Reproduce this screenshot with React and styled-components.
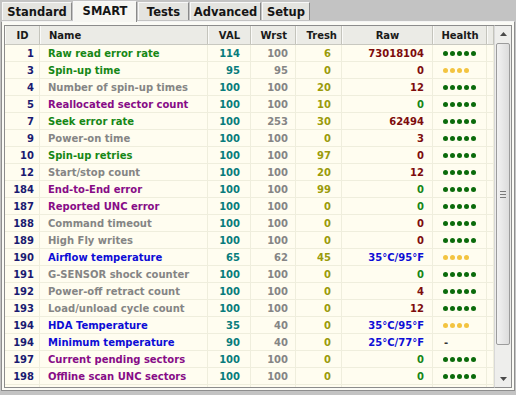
import React from 'react';
import styled, { createGlobalStyle } from 'styled-components';

const GlobalStyle = createGlobalStyle`
  html, body { margin: 0; padding: 0; background: #c3c3c3; }
  body { font-family: Tahoma, "DejaVu Sans", sans-serif; }
`;

const C = {
  green: '#168716',
  gray: '#858585',
  purple: '#870c87',
  blue: '#0d0dd6',
  teal: '#087c7c',
  olive: '#9b9b0a',
  red: '#7d0c0c',
  navy: '#1a1a70',
};

const rows = [
  ['1', 'Raw read error rate', 'green', '114', '100', '6', '73018104', 'red', 5],
  ['3', 'Spin-up time', 'green', '95', '95', '0', '0', 'red', 4],
  ['4', 'Number of spin-up times', 'gray', '100', '100', '20', '12', 'red', 5],
  ['5', 'Reallocated sector count', 'purple', '100', '100', '10', '0', 'green', 5],
  ['7', 'Seek error rate', 'green', '100', '253', '30', '62494', 'red', 5],
  ['9', 'Power-on time', 'gray', '100', '100', '0', '3', 'red', 5],
  ['10', 'Spin-up retries', 'green', '100', '100', '97', '0', 'red', 5],
  ['12', 'Start/stop count', 'gray', '100', '100', '20', '12', 'red', 5],
  ['184', 'End-to-End error', 'purple', '100', '100', '99', '0', 'green', 5],
  ['187', 'Reported UNC error', 'purple', '100', '100', '0', '0', 'green', 5],
  ['188', 'Command timeout', 'gray', '100', '100', '0', '0', 'red', 5],
  ['189', 'High Fly writes', 'gray', '100', '100', '0', '0', 'red', 5],
  ['190', 'Airflow temperature', 'blue', '65', '62', '45', '35°C/95°F', 'blue', 4],
  ['191', 'G-SENSOR shock counter', 'gray', '100', '100', '0', '0', 'green', 5],
  ['192', 'Power-off retract count', 'gray', '100', '100', '0', '4', 'red', 5],
  ['193', 'Load/unload cycle count', 'gray', '100', '100', '0', '12', 'red', 5],
  ['194', 'HDA Temperature', 'blue', '35', '40', '0', '35°C/95°F', 'blue', 4],
  ['194', 'Minimum temperature', 'blue', '90', '40', '0', '25°C/77°F', 'blue', 0],
  ['197', 'Current pending sectors', 'purple', '100', '100', '0', '0', 'green', 5],
  ['198', 'Offline scan UNC sectors', 'purple', '100', '100', '0', '0', 'green', 5],
  ['199', 'UltraDMA CRC error count', 'purple', '200', '200', '0', '0', 'green', 5],
];

const tabs = [
  ['Standard', 70],
  ['SMART', 64],
  ['Tests', 51],
  ['Advanced', 71],
  ['Setup', 48],
];
const cols = '35px 168px 43px 45px 46px 91px 54px 1fr';

// padding of each column, taken from the reference
const pad = ['0 5px 0 2px', '0 4px 0 8px', '0 10px 0 2px', '0 7px 0 2px', '0 10px 0 2px', '0 8px 0 2px', '0 2px 0 10px', '0'];

export default function App() {
  return (
    <>
      <GlobalStyle />
      <Window>
        <TabBar>
          {tabs.map(([t, w]) => (
            <Tab key={t} $w={w} $active={t === 'SMART'}>{t}</Tab>
          ))}
        </TabBar>
        <Panel>
          <Grid>
            <HeadRow>
              <Head $align="center">ID</Head>
              <Head $align="left" $pad={pad[1]}>Name</Head>
              <Head $align="right" $pad={pad[2]}>VAL</Head>
              <Head $align="right" $pad="0 8px 0 2px">Wrst</Head>
              <Head $align="right" $pad="0 4px 0 2px">Tresh</Head>
              <Head $align="center">Raw</Head>
              <Head $align="center">Health</Head>
              <Head />
            </HeadRow>
            <Body>
              {rows.map((r, i) => (
                <Row key={i}>
                  <Cell $pad={pad[0]} $color={C.navy}>{r[0]}</Cell>
                  <Cell $pad={pad[1]} $align="left" $color={C[r[2]]}>{r[1]}</Cell>
                  <Cell $pad={pad[2]} $color={C.teal}>{r[3]}</Cell>
                  <Cell $pad={pad[3]} $color={C.gray}>{r[4]}</Cell>
                  <Cell $pad={pad[4]} $color={C.olive}>{r[5]}</Cell>
                  <Cell $pad={pad[5]} $color={C[r[7]]}>{r[6]}</Cell>
                  <Cell $pad={pad[6]} $align="left">
                    {r[8] === 0 ? (
                      <Dash>-</Dash>
                    ) : (
                      <Dots>
                        {Array.from({ length: r[8] }).map((_, k) => (
                          <Dot key={k} $warn={r[8] === 4} />
                        ))}
                      </Dots>
                    )}
                  </Cell>
                  <Cell $pad={pad[7]} />
                </Row>
              ))}
            </Body>
          </Grid>
          <ScrollBar>
            <Arrow>
              <svg width="7" height="4" viewBox="0 0 7 4"><path d="M0 4 L3.5 0 L7 4Z" fill="#4a4a4a" /></svg>
            </Arrow>
            <Track>
              <Thumb>
                <Grip>
                  <span /><span /><span />
                </Grip>
              </Thumb>
            </Track>
            <Arrow>
              <svg width="7" height="4" viewBox="0 0 7 4"><path d="M0 0 L3.5 4 L7 0Z" fill="#4a4a4a" /></svg>
            </Arrow>
          </ScrollBar>
        </Panel>
      </Window>
    </>
  );
}

const Window = styled.div`
  width: 516px;
  height: 395px;
  display: flex;
  flex-direction: column;
  overflow: hidden;
  background: #c3c3c3;
  font-size: 10px;
  font-weight: bold;
`;

const TabBar = styled.div`
  display: flex;
  align-items: flex-end;
  height: 21px;
  padding-left: 2px;
  gap: 1px;
`;

const Tab = styled.div`
  box-sizing: border-box;
  width: ${(p) => p.$w}px;
  height: ${(p) => (p.$active ? '21px' : '18px')};
  margin-bottom: ${(p) => (p.$active ? '-1px' : '1px')};
  padding-bottom: ${(p) => (p.$active ? '2px' : '0')};
  display: flex;
  align-items: center;
  justify-content: center;
  font-size: 11.5px;
  color: #151515;
  background: ${(p) => (p.$active ? '#f6f6f2' : '#e4e4e0')};
  border-right: 1px solid #8a8a8a;
  border-top: 1px solid #f8f8f8;
  border-left: 1px solid #f8f8f8;
  position: relative;
  z-index: ${(p) => (p.$active ? 2 : 1)};
`;

const Panel = styled.div`
  flex: 1;
  margin: 0 1px 4px 1px;
  display: flex;
  border: 1px solid #8e8e8e;
  border-top-color: #f4f4f4;
  background: #fbfbf6;
  padding: 3px 2px 2px 2px;
  min-height: 0;
`;

const Grid = styled.div`
  flex: 1;
  display: flex;
  flex-direction: column;
  border: 1px solid #8c8c8c;
  border-right: none;
  min-height: 0;
  overflow: hidden;
`;

const HeadRow = styled.div`
  display: grid;
  grid-template-columns: ${cols};
  height: 18px;
  background: #ebebe6;
  border-bottom: 1px solid #c8c8c0;
`;

const Head = styled.div`
  display: flex;
  align-items: center;
  justify-content: ${(p) => (p.$align === 'left' ? 'flex-start' : p.$align === 'right' ? 'flex-end' : 'center')};
  padding: ${(p) => p.$pad || '0 2px'};
  color: #1a1a1a;
  border-right: 1px solid #c4c4bc;
  border-left: 1px solid #fafaf8;
`;

const Body = styled.div`
  flex: 1;
  background: #fffdf0;
  overflow: hidden;
`;

const Row = styled.div`
  display: grid;
  grid-template-columns: ${cols};
  height: 17px;
  border-bottom: 1px solid #efeedd;
  box-sizing: border-box;
`;

const Cell = styled.div`
  display: flex;
  align-items: center;
  justify-content: ${(p) => (p.$align === 'left' ? 'flex-start' : 'flex-end')};
  padding: ${(p) => p.$pad};
  color: ${(p) => p.$color || '#000'};
  border-right: 1px solid #efeedd;
  white-space: nowrap;
  overflow: hidden;
`;

const Dots = styled.div`
  display: flex;
  gap: 2px;
`;

const Dot = styled.span`
  width: 5px;
  height: 5px;
  border-radius: 50%;
  background: ${(p) => (p.$warn ? '#f3c440' : '#0b6b0b')};
`;

const Dash = styled.span`
  color: #333;
  padding-left: 1px;
`;

const ScrollBar = styled.div`
  width: 16px;
  display: flex;
  flex-direction: column;
  background: #eeeeec;
  border: 1px solid #8c8c8c;
  border-left: 1px solid #d8d8d8;
`;

const Arrow = styled.div`
  height: 16px;
  display: flex;
  align-items: center;
  justify-content: center;
`;

const Track = styled.div`
  flex: 1;
  padding: 1px 1px 26px 1px;
  display: flex;
`;

const Thumb = styled.div`
  flex: 1;
  border: 1px solid #9c9c9c;
  border-radius: 2px;
  background: linear-gradient(to right, #f2f2f2, #dcdcdc);
  display: flex;
  align-items: center;
  justify-content: center;
`;

const Grip = styled.div`
  display: flex;
  flex-direction: column;
  gap: 2px;
  span {
    display: block;
    width: 6px;
    height: 1px;
    background: #7a7a7a;
  }
`;
